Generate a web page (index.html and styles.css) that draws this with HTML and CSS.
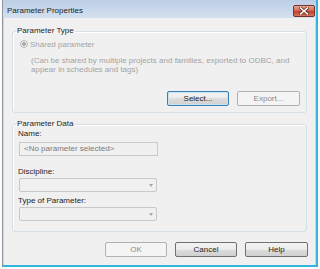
FILE: index.html
```html
<!DOCTYPE html>
<html lang="en">
<head>
  <meta charset="UTF-8">
  <meta name="viewport" content="width=device-width, initial-scale=1.0">
  <title>Parameter Properties</title>
  <link rel="stylesheet" href="styles.css">
</head>
<body>
  <div class="screen">
    <div class="window">
      <div class="titlebar">
        <span class="title">Parameter Properties</span>
        <span class="close">
          <svg width="10" height="8" viewBox="0 0 10 8">
            <path d="M1.5 1 L8.5 7 M8.5 1 L1.5 7" stroke="#5a2a24" stroke-width="3" stroke-linecap="square"/>
            <path d="M1.5 1 L8.5 7 M8.5 1 L1.5 7" stroke="#ffffff" stroke-width="1.6" stroke-linecap="square"/>
          </svg>
        </span>
      </div>

      <div class="content">
        <fieldset class="group group-type">
          <legend>Parameter Type</legend>
          <div class="radio disabled"><span class="radio-dot"></span>Shared parameter</div>
          <p class="note">(Can be shared by multiple projects and families, exported to ODBC, and<br>appear in schedules and tags)</p>
          <div class="btn-row">
            <button class="btn default">Select...</button>
            <button class="btn wide" disabled>Export...</button>
          </div>
        </fieldset>

        <fieldset class="group group-data">
          <legend>Parameter Data</legend>
          <div class="field-label">Name:</div>
          <div class="textbox">&lt;No parameter selected&gt;</div>
          <div class="field-label label-gap">Discipline:</div>
          <div class="combo"><span class="arrow"></span></div>
          <div class="field-label label-gap-sm">Type of Parameter:</div>
          <div class="combo"><span class="arrow"></span></div>
        </fieldset>

        <div class="dialog-buttons">
          <button class="btn" disabled>OK</button>
          <button class="btn">Cancel</button>
          <button class="btn wide">Help</button>
        </div>
      </div>
    </div>
  </div>
</body>
</html>
```

FILE: styles.css
```css
body {
  margin: 0;
  padding: 0;
  font-family: "Liberation Sans", Arial, sans-serif;
  font-size: 8px;
  background-color: #fbfbfb;
}
.screen {
  width: 320px;
  height: 269px;
  overflow: hidden;
  background-color: #fbfbfb;
}
.window {
  margin-left: 2px;
  width: 313px;
  height: 265px;
  border-left: 1px solid #8d949c;
  border-right: 2px solid #31b6dd;
  border-bottom: 2px solid #31b6dd;
  background-color: #c9d8ea;
  display: flex;
  flex-direction: column;
}
.titlebar {
  height: 18px;
  flex-shrink: 0;
  display: flex;
  align-items: flex-start;
  background: linear-gradient(#bccee6, #d3e0ef);
}
.title {
  margin: 6px 0 0 4px;
  line-height: 10px;
  color: #1e1e1e;
}
.close {
  margin: 5px 1px 0 auto;
  width: 20px;
  height: 10px;
  border: 1px solid #7a3127;
  border-radius: 2px;
  background: linear-gradient(#e8a597 0%, #d66a55 45%, #c2402b 55%, #d9735c 100%);
  display: flex;
  align-items: center;
  justify-content: center;
}
.close svg {
  display: block;
}
.content {
  flex: 1;
  margin: 0 1px;
  background-color: #f0f0f0;
  display: flex;
  flex-direction: column;
}
.group {
  margin: 0 8px;
  padding: 0 6px 6px 5px;
  border: 1px solid #d5dfe5;
  border-radius: 3px;
  box-shadow: inset 1px 1px 0 #ffffff;
  min-width: 0;
}
.group legend {
  margin-left: -2px;
  padding: 0 1px;
  line-height: 10px;
  color: #1e1e1e;
}
.group-type {
  margin-top: 8px;
}
.radio {
  margin-top: 3px;
  padding-left: 2px;
  height: 10px;
  display: flex;
  align-items: center;
  gap: 2px;
  color: #a3a3a3;
}
.radio-dot {
  width: 6px;
  height: 6px;
  border: 1px solid #b8b8b8;
  border-radius: 50%;
  background: radial-gradient(circle, #a9a9a9 0 1.8px, #f4f4f4 2.2px);
}
.note {
  margin: 6.5px 0 0 13px;
  line-height: 9.5px;
  color: #a3a3a3;
  white-space: nowrap;
}
.btn-row {
  margin-top: 16.5px;
  display: flex;
  justify-content: flex-end;
  gap: 8px;
}
.btn {
  width: 62px;
  height: 15px;
  padding: 0;
  border: 1px solid #707070;
  border-radius: 2px;
  background: linear-gradient(#f3f3f3 0%, #ebebeb 50%, #dddddd 50%, #d0d0d0 100%);
  font: inherit;
  line-height: 13px;
  color: #1e1e1e;
}
.btn.wide {
  width: 63px;
}
.btn.default {
  border-color: #3c7fb1;
  box-shadow: inset 0 0 0 1px #c4e5f6;
}
.btn:disabled {
  border-color: #adb2b5;
  background: #f4f4f4;
  color: #8a8a8a;
}
.group-data {
  margin-top: 6px;
  padding-bottom: 10px;
}
.field-label {
  line-height: 10px;
  color: #1e1e1e;
}
.label-gap {
  margin-top: 11px;
}
.label-gap-sm {
  margin-top: 4px;
}
.textbox {
  margin: 3px 0 0 1px;
  width: 136px;
  height: 12px;
  border: 1px solid #c9c9c9;
  background-color: #f0f0f0;
  padding-left: 4px;
  box-sizing: content-box;
  width: 133px;
  line-height: 12px;
  color: #7a7a7a;
}
.combo {
  margin: 1px 0 0 1px;
  width: 136px;
  height: 12px;
  border: 1px solid #c9c9c9;
  border-radius: 2px;
  background-color: #f0f0f0;
  display: flex;
  align-items: center;
  justify-content: flex-end;
}
.arrow {
  margin-right: 3px;
  width: 0;
  height: 0;
  border-left: 2.5px solid transparent;
  border-right: 2.5px solid transparent;
  border-top: 3px solid #a8a8a8;
}
.dialog-buttons {
  margin-top: 10px;
  padding-right: 7px;
  display: flex;
  justify-content: flex-end;
  gap: 8px;
}
```
